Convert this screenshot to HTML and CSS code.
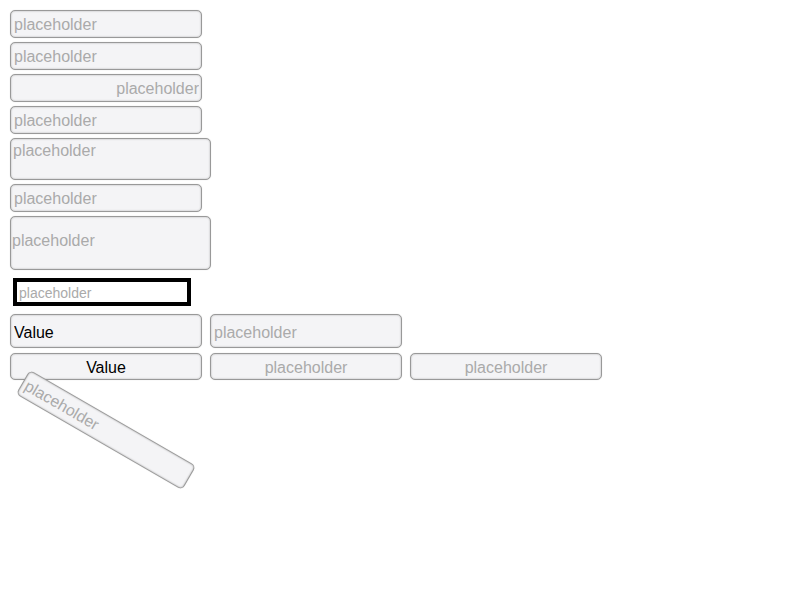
FILE: index.html
```html
<!DOCTYPE html>
<html lang="en">
<head>
  <meta charset="UTF-8">
  <title>inputs</title>
  <link rel="stylesheet" href="styles.css">
</head>
<body>

  <div class="campos">
    <input class="campo" placeholder="placeholder">
    <input class="campo" placeholder="placeholder">
    <input class="campo derecha" placeholder="placeholder">
    <input class="campo" placeholder="placeholder">
    <textarea class="campo area" placeholder="placeholder"></textarea>
    <input class="campo" placeholder="placeholder">
    <input class="campo alto" placeholder="placeholder">
    <input class="negro" placeholder="placeholder">

    <div class="fila fila-grande">
      <input class="campo" value="Value" placeholder="placeholder">
      <input class="campo" placeholder="placeholder">
    </div>

    <div class="fila fila-centro">
      <input class="campo" value="Value" placeholder="placeholder">
      <input class="campo" placeholder="placeholder">
      <input class="campo" placeholder="placeholder">
    </div>

    <input class="campo girado" placeholder="placeholder">
  </div>

</body>
</html>
```

FILE: styles.css
```css
html {
  height: 100%;
}

body {
  box-sizing: border-box;
  min-height: 100%;
  margin: 0;
  padding: 10px;
  background: white;
  font-family: "Liberation Sans", Arial, sans-serif;
}

.campos {
  display: flex;
  flex-direction: column;
  align-items: flex-start;
  gap: 4px;
}

.campo {
  box-sizing: border-box;
  width: 192px;
  height: 28px;
  margin: 0;
  padding: 2px 3px 0;
  border: 1px solid #999999;
  border-radius: 5px;
  background: #f4f4f6;
  box-shadow: inset 0 0 2px rgba(0, 0, 0, 0.3), 0 0 1px rgba(0, 0, 0, 0.2);
  font-family: "Liberation Sans", Arial, sans-serif;
  font-size: 16px;
  color: black;
  outline: none;
}

.campo::placeholder {
  color: #aaaaaa;
}

.derecha {
  text-align: right;
  padding-right: 2px;
}

.area {
  width: 201px;
  height: 42px;
  padding: 3px 2px 0;
  resize: none;
  overflow: hidden;
  display: block;
}

.alto {
  width: 201px;
  height: 54px;
  padding: 0 1px 4px;
}

.negro {
  box-sizing: border-box;
  width: 178px;
  height: 28px;
  margin: 4px 0 0 3px;
  padding: 2px 2px 0;
  border: 4px solid black;
  border-radius: 0;
  background: white;
  font-family: "Liberation Sans", Arial, sans-serif;
  font-size: 14px;
  outline: none;
}

.negro::placeholder {
  color: #aaaaaa;
}

.fila {
  display: flex;
  gap: 8px;
}

.fila-grande {
  margin-top: 4px;
}

.fila-grande .campo {
  height: 34px;
  padding-top: 4px;
}

.fila-centro {
  margin-top: 1px;
}

.fila-centro .campo {
  height: 27px;
  text-align: center;
}

.girado {
  margin-top: 32px;
  margin-left: 0;
  transform: rotate(30deg);
}
```
